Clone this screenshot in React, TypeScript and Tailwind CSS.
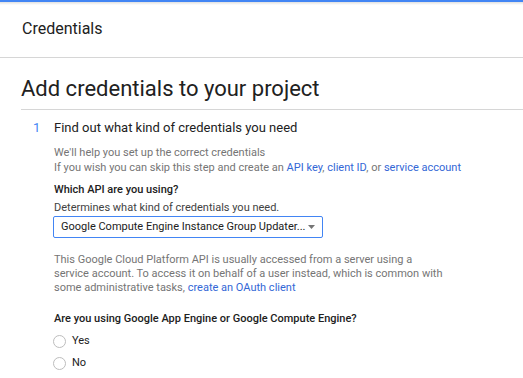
import React from "react";

export default function App() {
  return (
    <div className="w-[523px] h-[378px] overflow-hidden bg-white text-[#212121]" style={{ fontFamily: "Roboto, 'Liberation Sans', sans-serif" }}>
      <div className="h-[2px] bg-[#4285f4]" />
      <div className="h-[3px] bg-gradient-to-b from-[#e0e0e0] to-white" />
      <div className="h-[53px] border-b border-[#d6d6d6] flex items-center pl-[22px]">
        <span className="text-[16px] text-[#212121] -mt-[4px]">Credentials</span>
      </div>
      <div className="pl-[21px]">
        <div className="h-[52px] border-b border-[#d6d6d6] flex items-end pb-[5px]">
          <h1 className="text-[22px] leading-[30px] text-[#212121]">Add credentials to your project</h1>
        </div>
        <div className="flex pt-[8px]">
          <div className="w-[33px] pl-[12px] text-[13px] leading-[20px] text-[#4285f4]">1</div>
          <div className="flex-1">
            <div className="text-[13px] leading-[20px] text-[#212121]">Find out what kind of credentials you need</div>
            <div className="mt-[7px] text-[11px] leading-[15px] text-[#757575]">
              <div>We'll help you set up the correct credentials</div>
              <div>
                If you wish you can skip this step and create an{" "}
                <span className="text-[#3367d6]">API key</span>,{" "}
                <span className="text-[#3367d6]">client ID</span>, or{" "}
                <span className="text-[#3367d6]">service account</span>
              </div>
            </div>
            <div className="mt-[6px] text-[11px] leading-[17px] font-medium text-[#212121]">Which API are you using?</div>
            <div className="mt-[1px] text-[11px] leading-[17px] text-[#424242]">Determines what kind of credentials you need.</div>
            <div className="mt-0 w-[270px] h-[22px] border border-[#4285f4] rounded-[2px] flex items-center justify-between pl-[7px] pr-[7px] -ml-[1px]">
              <span className="text-[11px] text-[#212121] whitespace-nowrap">Google Compute Engine Instance Group Updater...</span>
              <svg width="7" height="4" viewBox="0 0 7 4"><path d="M0 0 L7 0 L3.5 4 Z" fill="#757575" /></svg>
            </div>
            <div className="mt-[15px] w-[392px] text-[11px] leading-[14px] text-[#757575]">
              This Google Cloud Platform API is usually accessed from a server using a service account. To access it on behalf of a user instead, which is common with some administrative tasks,{" "}
              <span className="text-[#3367d6]">create an OAuth client</span>
            </div>
            <div className="mt-[15px] text-[11px] leading-[17px] font-medium text-[#212121]">Are you using Google App Engine or Google Compute Engine?</div>
            <div className="mt-[7px] flex flex-col gap-[8px]">
              <div className="flex items-center gap-[6px] -ml-[1px]">
                <div className="w-[13px] h-[13px] rounded-full border border-[#bdbdbd]" />
                <span className="text-[11px] leading-[14px] text-[#212121]">Yes</span>
              </div>
              <div className="flex items-center gap-[6px] -ml-[1px]">
                <div className="w-[13px] h-[13px] rounded-full border border-[#bdbdbd]" />
                <span className="text-[11px] leading-[14px] text-[#212121]">No</span>
              </div>
            </div>
          </div>
        </div>
      </div>
    </div>
  );
}
